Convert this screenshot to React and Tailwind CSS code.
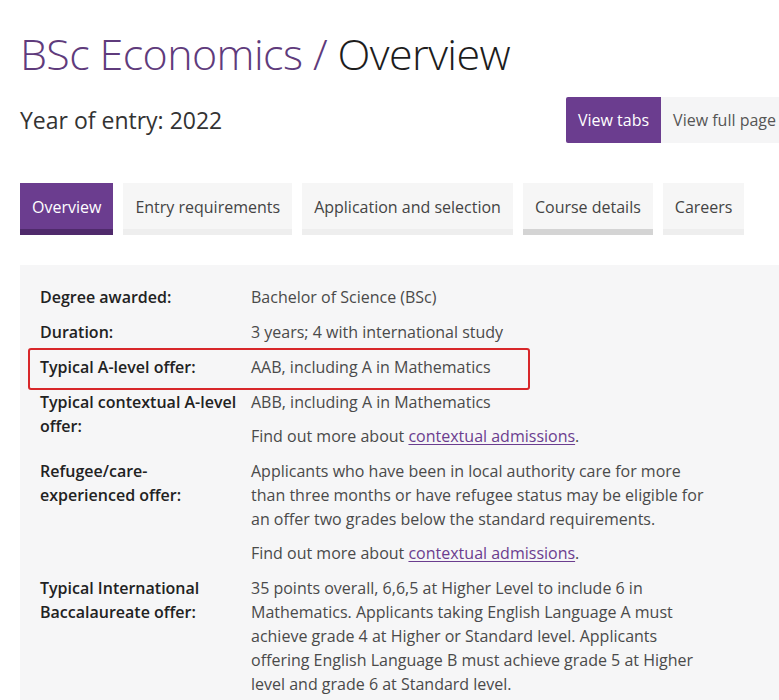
const tabs = [
  { label: "Overview", active: true },
  { label: "Entry requirements" },
  { label: "Application and selection" },
  { label: "Course details", hover: true },
  { label: "Careers" },
];

function Link({ children }) {
  return <a className="text-[#6b3d8f] underline underline-offset-2">{children}</a>;
}

function Row({ label, children, highlight }) {
  return (
    <div className="relative flex">
      {highlight && (
        <div className="absolute -left-3 -top-[7px] h-[42px] w-[502px] rounded-[3px] border-2 border-[#d8272a]" />
      )}
      <div className="w-[211px] shrink-0 pr-3 font-semibold text-[#222]">{label}</div>
      <div className="w-[460px] space-y-[10px] text-[#4a4a4a]">{children}</div>
    </div>
  );
}

export default function App() {
  return (
    <div className="h-[700px] w-[779px] overflow-hidden bg-white font-['Open_Sans',sans-serif]">
      <div className="pl-5 pt-[26px]">
        <h1 className="text-[43px] font-light leading-[56px] tracking-[-0.6px]">
          <span className="text-[#5f3b7c]">BSc Economics / </span>
          <span className="text-[#1d1d1d]">Overview</span>
        </h1>
        <div className="mt-[15px] flex items-center justify-between">
          <div className="text-[23px] text-[#333]">Year of entry: 2022</div>
          <div className="-mr-[9px] flex text-[16px]">
            <div className="flex h-[46px] items-center rounded-l-[2px] bg-[#6b3d8f] px-3 text-white">View tabs</div>
            <div className="flex h-[46px] items-center whitespace-nowrap bg-[#f5f5f6] px-3 text-[#555]">View full page</div>
          </div>
        </div>
        <div className="mt-10 flex gap-[10px] text-[16px]">
          {tabs.map((t) => (
            <div
              key={t.label}
              className={
                t.active
                  ? "flex h-[52px] items-center border-b-[6px] border-[#4f2a6b] bg-[#6b3d8f] px-3 pt-[2px] text-white"
                  : t.hover
                  ? "flex h-[52px] items-center border-b-[6px] border-[#d4d4d4] bg-[#f6f6f6] px-3 pt-[2px] text-[#444]"
                  : "flex h-[52px] items-center border-b-[6px] border-[#eeeeee] bg-[#f6f6f6] px-3 pt-[2px] text-[#444]"
              }
            >
              {t.label}
            </div>
          ))}
        </div>
        <div className="mt-[30px] bg-[#f6f6f7] pl-5 pt-[20px] pb-10 text-[16px] leading-[24px]">
          <div className="space-y-[11px]">
            <Row label="Degree awarded:">
              <p>Bachelor of Science (BSc)</p>
            </Row>
            <Row label="Duration:">
              <p>3 years; 4 with international study</p>
            </Row>
            <Row label="Typical A-level offer:" highlight>
              <p>AAB, including A in Mathematics</p>
            </Row>
            <Row label="Typical contextual A-level offer:">
              <p>ABB, including A in Mathematics</p>
              <p>
                Find out more about <Link>contextual admissions</Link>.
              </p>
            </Row>
            <Row label="Refugee/care-experienced offer:">
              <p>
                Applicants who have been in local authority care for more than three months or have refugee status may be eligible for an offer two grades below the standard requirements.
              </p>
              <p>
                Find out more about <Link>contextual admissions</Link>.
              </p>
            </Row>
            <Row label="Typical International Baccalaureate offer:">
              <p>
                35 points overall, 6,6,5 at Higher Level to include 6 in Mathematics. Applicants taking English Language A must achieve grade 4 at Higher or Standard level. Applicants offering English Language B must achieve grade 5 at Higher level and grade 6 at Standard level.
              </p>
            </Row>
          </div>
        </div>
      </div>
    </div>
  );
}
